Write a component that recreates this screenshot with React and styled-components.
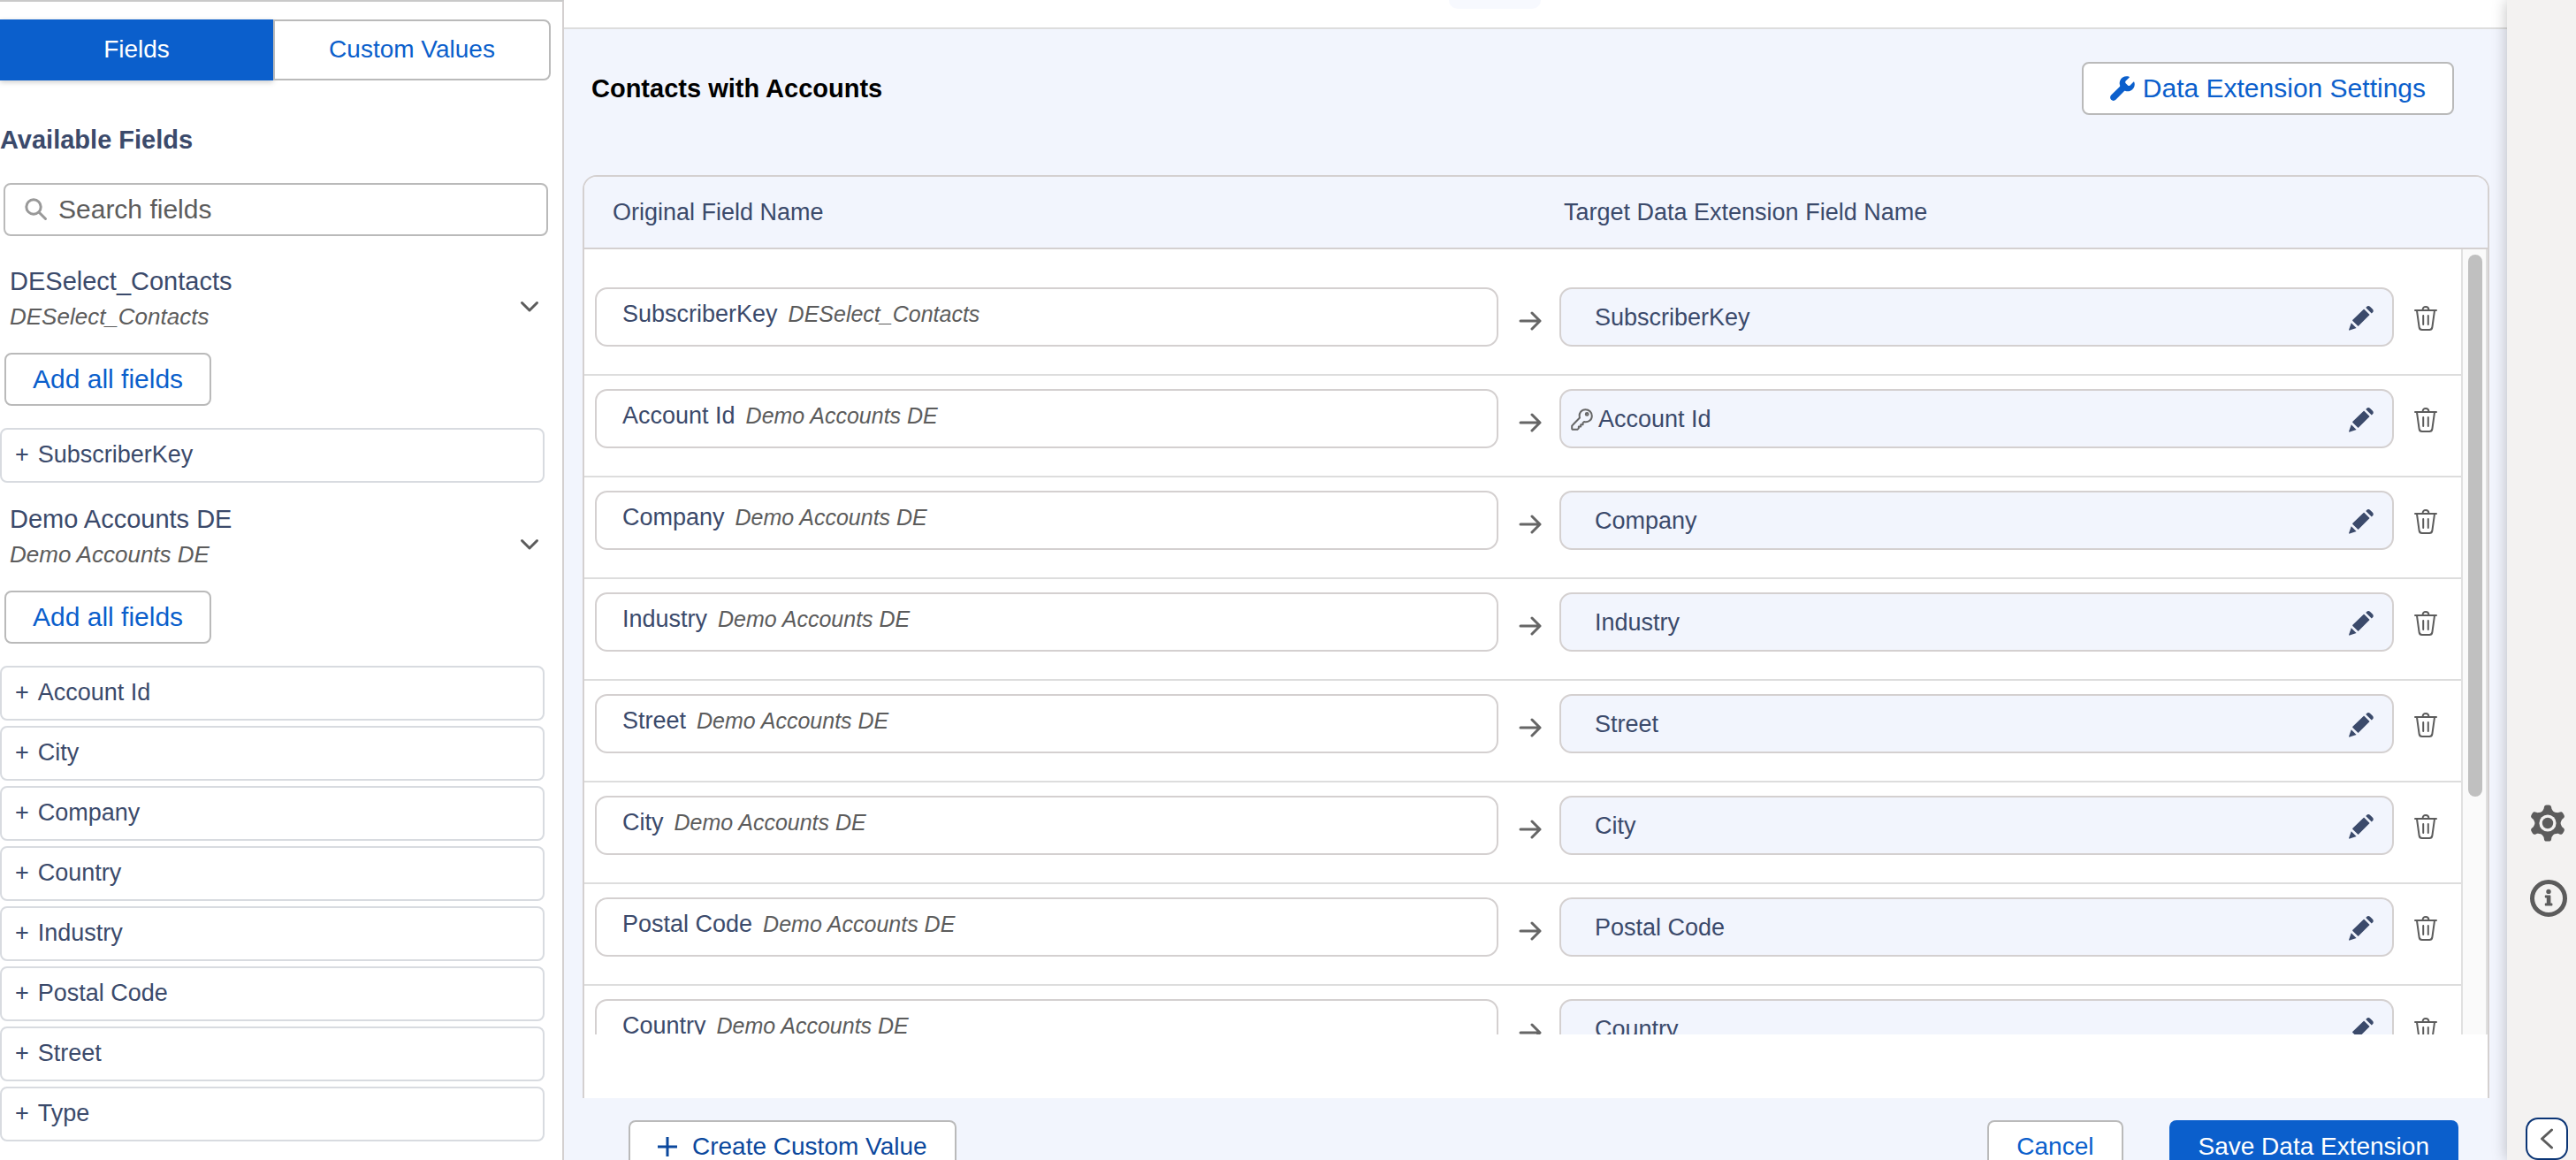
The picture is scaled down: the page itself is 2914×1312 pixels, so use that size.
import styled, { createGlobalStyle } from "styled-components";

const GlobalStyle = createGlobalStyle`
  * {
    box-sizing: border-box;
  }

  body {
    margin: 0;
    background: #ffffff;
    color: #3b4a6b;
    font-family: "Liberation Sans", Arial, sans-serif;
    font-size: 27px;
  }

  button,
  input {
    font-family: inherit;
  }

  svg {
    display: block;
    flex: none;
  }
`;

const fieldGroups = [
  {
    name: "DESelect_Contacts",
    source: "DESelect_Contacts",
    fields: ["SubscriberKey"],
  },
  {
    name: "Demo Accounts DE",
    source: "Demo Accounts DE",
    fields: [
      "Account Id",
      "City",
      "Company",
      "Country",
      "Industry",
      "Postal Code",
      "Street",
      "Type",
    ],
  },
];

const mappings = [
  { name: "SubscriberKey", source: "DESelect_Contacts" },
  { name: "Account Id", source: "Demo Accounts DE", isKey: true },
  { name: "Company", source: "Demo Accounts DE" },
  { name: "Industry", source: "Demo Accounts DE" },
  { name: "Street", source: "Demo Accounts DE" },
  { name: "City", source: "Demo Accounts DE" },
  { name: "Postal Code", source: "Demo Accounts DE" },
  { name: "Country", source: "Demo Accounts DE" },
];

// Icons
const SearchIcon = () => (
  <svg width="26" height="26" viewBox="0 0 26 26" fill="none" stroke="#999999" strokeWidth="3">
    <circle cx="10" cy="10" r="8.2" />
    <path d="M16 16L23.5 23.5" strokeLinecap="round" />
  </svg>
);

const ChevronIcon = () => (
  <svg width="22" height="14" viewBox="0 0 22 14" fill="none" stroke="#5c5c5c" strokeWidth="3">
    <path d="M2.5 2.5L11 11L19.5 2.5" strokeLinecap="round" strokeLinejoin="round" />
  </svg>
);

const WrenchIcon = () => (
  <svg width="28" height="28" viewBox="0 0 28 28" fill="#0b5fcc">
    <path d="M21.5 0.8C17.5 -0.6 12.8 1.2 11.2 5.2C10.5 7 10.5 8.9 11.1 10.6C11.3 11.1 11.2 11.5 10.9 11.9L1.2 21.6C-0.3 23.1 -0.3 25.3 1.1 26.8C2.6 28.3 4.9 28.3 6.4 26.8L16 17.1C16.4 16.8 16.9 16.7 17.4 16.9C19.1 17.5 21 17.5 22.8 16.8C26.8 15.2 28.7 11 27.3 6.9C27.1 6.5 26.6 6.4 26.3 6.7L22.6 10.5C21.9 11.2 20.7 11.2 20 10.5L17.7 8.2C17 7.5 17 6.3 17.7 5.6L21.6 1.8C22 1.5 21.9 1 21.5 0.8Z" />
  </svg>
);

const ArrowIcon = () => (
  <svg width="26" height="22" viewBox="0 0 26 22" fill="none" stroke="#666666" strokeWidth="3">
    <path d="M2 11H24M15 2L24 11L15 20" strokeLinecap="round" strokeLinejoin="round" />
  </svg>
);

const KeyIcon = () => (
  <svg width="25" height="25" viewBox="0 0 25 25" fill="none" stroke="#666666" strokeWidth="2">
    <path
      d="M10 10.5C8.6 5.4 12 1.2 16.5 1.2C20.6 1.2 23.8 4.4 23.8 8.4C23.8 12.8 19.8 16 15 15L13.6 16.2V18.2H11.2V20.4H8.8V22.4L7.4 23.8H2.4C1.6 23.8 1.2 23.4 1.2 22.6V19.6Z"
      strokeLinejoin="round"
    />
    <circle cx="18.2" cy="6.4" r="1.4" />
  </svg>
);

const PencilIcon = () => (
  <svg width="28" height="28" viewBox="0 0 28 28" fill="#3b4a6b">
    <path d="M20 1.2C21.2 -0.2 22.8 -0.2 24.2 1L26.8 3.6C28.1 5 28.1 6.4 26.8 7.6L25.8 8.6L19.2 2Z" />
    <path d="M17.6 4L23.6 10L10.6 23L4.4 17C4 16.6 4 16.2 4.4 15.8L16.6 4C17 3.6 17.3 3.7 17.6 4Z" />
    <path d="M2.8 19.2L8.6 25L1 27.6C0.4 27.8 -0.1 27.4 0.1 26.8Z" />
  </svg>
);

const TrashIcon = () => (
  <svg width="26" height="28" viewBox="0 0 26 28" fill="none" stroke="#5c5c5c" strokeWidth="2">
    <path d="M1 5H25" strokeLinecap="round" />
    <path d="M9.6 4.6C9.6 2.2 10.8 1 13 1C15.2 1 16.4 2.2 16.4 4.6" />
    <path d="M3 5.4L5.6 24C5.9 26 7 27 8.8 27H17.2C19 27 20.1 26 20.4 24L23 5.4" />
    <path d="M10.2 11V21M15.8 11V21" strokeLinecap="round" />
  </svg>
);

const GearIcon = () => (
  <svg width="40" height="42" viewBox="0 0 40 42" fill="#5c5c5c">
    {[0, 60, 120, 180, 240, 300].map((angle) => (
      <path
        key={angle}
        d="M10.5 12L14.6 6.4C15.4 5.4 15.7 4.8 15.8 3.6C16 1.4 17 0.4 18.8 0.4H21.2C23 0.4 24 1.4 24.2 3.6C24.3 4.8 24.6 5.4 25.4 6.4L29.5 12Z"
        transform={`rotate(${angle} 20 21)`}
      />
    ))}
    <circle cx="20" cy="21" r="14.4" />
    <circle cx="20" cy="21" r="9.6" fill="#f3f2f1" />
    <circle cx="20" cy="21" r="6.2" />
  </svg>
);

const InfoIcon = () => (
  <svg width="42" height="42" viewBox="0 0 42 42" fill="#5c5c5c">
    <circle cx="21" cy="21" r="18.5" fill="none" stroke="#5c5c5c" strokeWidth="5" />
    <circle cx="21" cy="13.4" r="2.7" />
    <path d="M17.8 17.6H22.4C23 17.6 23.4 18 23.4 18.6V26.6H24.4C25 26.6 25.4 27 25.4 27.6V28.6C25.4 29.2 25 29.6 24.4 29.6H17.8C17.2 29.6 16.8 29.2 16.8 28.6V27.6C16.8 27 17.2 26.6 17.8 26.6H18.8V20.6H17.8C17.2 20.6 16.8 20.2 16.8 19.6V18.6C16.8 18 17.2 17.6 17.8 17.6Z" />
  </svg>
);

const CollapseIcon = () => (
  <svg width="16" height="24" viewBox="0 0 16 24" fill="none" stroke="#5c5c5c" strokeWidth="3">
    <path d="M13.5 2L2.5 12L13.5 22" strokeLinecap="round" strokeLinejoin="round" />
  </svg>
);

const PlusIcon = () => (
  <svg width="22" height="22" viewBox="0 0 22 22" fill="none" stroke="#0b489d" strokeWidth="3">
    <path d="M11 0V22M0 11H22" />
  </svg>
);

const App = () => {
  return (
    <Page>
      <GlobalStyle />

      <Sidebar>
        <Tabs>
          <Tab type="button" $active>
            Fields
          </Tab>
          <Tab type="button">Custom Values</Tab>
        </Tabs>

        <SidebarTitle>Available Fields</SidebarTitle>

        <SearchBox>
          <SearchIcon />
          <input type="text" placeholder="Search fields" aria-label="Search fields" />
        </SearchBox>

        {fieldGroups.map((group) => (
          <FieldGroup key={group.name}>
            <GroupHeader type="button">
              <div>
                <GroupName>{group.name}</GroupName>
                <GroupSource>{group.source}</GroupSource>
              </div>
              <ChevronIcon />
            </GroupHeader>
            <AddAllButton type="button">Add all fields</AddAllButton>
            <FieldList>
              {group.fields.map((field) => (
                <li key={field}>
                  <FieldItem type="button">
                    <span>+</span>
                    {field}
                  </FieldItem>
                </li>
              ))}
            </FieldList>
          </FieldGroup>
        ))}
      </Sidebar>

      <Main>
        <TopBar>
          <TopPill />
        </TopBar>

        <Header>
          <h1>Contacts with Accounts</h1>
          <SettingsButton type="button">
            <WrenchIcon />
            Data Extension Settings
          </SettingsButton>
        </Header>

        <Panel>
          <MappingTable>
            <thead>
              <HeadRow>
                <th>Original Field Name</th>
                <th>Target Data Extension Field Name</th>
              </HeadRow>
            </thead>
            <tbody>
              {mappings.map((mapping) => (
                <MappingRow key={mapping.name}>
                  <td>
                    <OriginalField>
                      {mapping.name}
                      <em>{mapping.source}</em>
                    </OriginalField>
                  </td>
                  <ArrowCell>
                    <ArrowIcon />
                  </ArrowCell>
                  <td>
                    <TargetField $isKey={mapping.isKey}>
                      {mapping.isKey && <KeyIcon />}
                      <span>{mapping.name}</span>
                      <IconButton type="button" aria-label={`Edit ${mapping.name}`}>
                        <PencilIcon />
                      </IconButton>
                    </TargetField>
                  </td>
                  <DeleteCell>
                    <IconButton type="button" aria-label={`Delete ${mapping.name}`}>
                      <TrashIcon />
                    </IconButton>
                  </DeleteCell>
                </MappingRow>
              ))}
            </tbody>
          </MappingTable>
          <ScrollTrack>
            <ScrollThumb />
          </ScrollTrack>
        </Panel>

        <Footer>
          <CreateButton type="button">
            <PlusIcon />
            Create Custom Value
          </CreateButton>
          <FooterActions>
            <CancelButton type="button">Cancel</CancelButton>
            <SaveButton type="button">Save Data Extension</SaveButton>
          </FooterActions>
        </Footer>
      </Main>

      <Rail>
        <RailTools>
          <IconButton type="button" aria-label="Settings">
            <GearIcon />
          </IconButton>
          <IconButton type="button" aria-label="Information">
            <InfoIcon />
          </IconButton>
        </RailTools>
        <CollapseButton type="button" aria-label="Expand panel">
          <CollapseIcon />
        </CollapseButton>
      </Rail>
    </Page>
  );
};

const Page = styled.div`
  display: flex;
  height: 100vh;
  overflow: hidden;
`;

// Sidebar
const Sidebar = styled.aside`
  flex: 0 0 638px;
  overflow: hidden;
  padding-top: 20px;
  border-top: 2px solid #c9c9c9;
  border-right: 2px solid #d4d0d0;
  background: #ffffff;
`;

const Tabs = styled.div`
  display: grid;
  grid-template-columns: 309fr 314fr;
  height: 69px;
  margin-right: 13px;
`;

const Tab = styled.button`
  padding: 0 0 2px;
  border: 2px solid ${(props) => (props.$active ? "#0b5fcc" : "#bababa")};
  border-radius: ${(props) => (props.$active ? "0" : "0 8px 8px 0")};
  background: ${(props) => (props.$active ? "#0b5fcc" : "#ffffff")};
  color: ${(props) => (props.$active ? "#ffffff" : "#0b5fcc")};
  font-size: 28px;
  box-shadow: ${(props) => (props.$active ? "0 2px 6px rgba(0, 0, 0, 0.2)" : "none")};
  cursor: pointer;
`;

const SidebarTitle = styled.h2`
  margin: 50px 0 31px;
  font-size: 29px;
  line-height: 35px;
`;

const SearchBox = styled.label`
  display: flex;
  align-items: center;
  gap: 12px;
  height: 60px;
  margin: 0 16px 31px 4px;
  padding: 0 22px;
  border: 2px solid #bababa;
  border-radius: 8px;

  input {
    flex: 1;
    padding: 0;
    border: none;
    outline: none;
    background: transparent;
    font-size: 30px;
  }

  input::placeholder {
    color: #5c5c5c;
  }
`;

const FieldGroup = styled.section`
  margin-bottom: 21px;
`;

const GroupHeader = styled.button`
  display: flex;
  align-items: flex-end;
  justify-content: space-between;
  width: 100%;
  padding: 0 26px 0 11px;
  border: none;
  background: none;
  color: inherit;
  text-align: left;
  cursor: pointer;

  svg {
    margin-bottom: 24px;
  }
`;

const GroupName = styled.div`
  font-size: 29px;
  line-height: 40px;
`;

const GroupSource = styled.div`
  color: #5c5c5c;
  font-size: 26px;
  font-style: italic;
  line-height: 40px;
`;

const AddAllButton = styled.button`
  height: 60px;
  margin: 21px 0 25px 5px;
  padding: 0 30px;
  border: 2px solid #bababa;
  border-radius: 8px;
  background: #ffffff;
  color: #0b5fcc;
  font-size: 30px;
  cursor: pointer;
`;

const FieldList = styled.ul`
  display: flex;
  flex-direction: column;
  gap: 6px;
  margin: 0 20px 0 0;
  padding: 0;
  list-style: none;
`;

const FieldItem = styled.button`
  display: flex;
  align-items: center;
  gap: 10px;
  width: 100%;
  height: 62px;
  padding: 0 15px 2px;
  border: 2px solid #d8dbe0;
  border-radius: 8px;
  background: #ffffff;
  color: #3b4a6b;
  font-size: 27px;
  cursor: pointer;
`;

// Main
const Main = styled.main`
  display: flex;
  flex: 1;
  flex-direction: column;
  min-width: 0;
  background: #f2f5fd;
`;

const TopBar = styled.div`
  display: flex;
  flex: none;
  justify-content: center;
  height: 33px;
  padding-right: 92px;
  border-bottom: 2px solid #dddddd;
  background: #ffffff;
`;

const TopPill = styled.div`
  width: 104px;
  height: 10px;
  border-radius: 0 0 16px 16px;
  background: #f7f9fe;
`;

const Header = styled.header`
  display: flex;
  flex: none;
  align-items: flex-start;
  justify-content: space-between;
  height: 165px;
  padding: 37px 60px 0 31px;

  h1 {
    margin: 0;
    color: #000000;
    font-size: 29px;
    line-height: 60px;
  }
`;

const SettingsButton = styled.button`
  display: flex;
  align-items: center;
  gap: 9px;
  height: 60px;
  padding: 0 30px;
  border: 2px solid #bababa;
  border-radius: 8px;
  background: #ffffff;
  color: #0b5fcc;
  font-size: 30px;
  cursor: pointer;
`;

const Panel = styled.section`
  position: relative;
  display: flex;
  flex: 1;
  flex-direction: column;
  min-height: 0;
  margin: 0 20px 0 21px;
  padding-bottom: 72px;
  border: 2px solid #d4d0d0;
  border-bottom: none;
  border-radius: 16px 16px 0 0;
  background: #ffffff;
`;

const MappingTable = styled.table`
  display: flex;
  flex: 1;
  flex-direction: column;
  min-height: 0;

  thead {
    display: block;
    border-bottom: 2px solid #d4d0d0;
    border-radius: 14px 14px 0 0;
    background: #f2f5fd;
  }

  tbody {
    display: block;
    flex: 1;
    min-height: 0;
    margin-right: 30px;
    padding-top: 28px;
    overflow: hidden;
  }

  th,
  td {
    display: block;
    padding: 0;
  }
`;

const HeadRow = styled.tr`
  display: grid;
  grid-template-columns: 1077fr 1046fr;
  padding: 0 0 0 32px;

  th {
    font-size: 27px;
    font-weight: 400;
    line-height: 80px;
    text-align: left;
  }
`;

const MappingRow = styled.tr`
  display: grid;
  grid-template-columns: 1022fr 69px 944fr 76px;
  height: 115px;
  padding: 15px 0 31px 12px;
  border-bottom: 2px solid #dddddd;
`;

const OriginalField = styled.div`
  display: flex;
  align-items: baseline;
  gap: 12px;
  height: 67px;
  padding: 13px 29px;
  border: 2px solid #d4d0d0;
  border-radius: 14px;
  line-height: 31px;

  em {
    color: #5c5c5c;
    font-size: 25px;
  }
`;

const ArrowCell = styled.td`
  && {
    display: flex;
    align-items: center;
    justify-content: center;
    padding: 8px 0 0 3px;
  }
`;

const TargetField = styled.div`
  display: flex;
  align-items: center;
  gap: 6px;
  height: 67px;
  padding: 2px 21px 0 ${(props) => (props.$isKey ? "11px" : "38px")};
  border: 2px solid #d4d0d0;
  border-radius: 14px;
  background: #f2f5fd;

  span {
    flex: 1;
  }
`;

const DeleteCell = styled.td`
  && {
    display: flex;
    align-items: center;
    padding: 2px 0 0 23px;
  }
`;

const IconButton = styled.button`
  padding: 0;
  border: none;
  background: none;
  cursor: pointer;
`;

const ScrollTrack = styled.div`
  position: absolute;
  top: 82px;
  right: 0;
  bottom: 72px;
  width: 30px;
  padding: 6px;
  border: solid #e0e0e0;
  border-width: 0 2px;
  background: #fafafa;
`;

const ScrollThumb = styled.div`
  width: 16px;
  height: 70%;
  border-radius: 8px;
  background: #c0c0c0;
`;

// Footer
const Footer = styled.footer`
  display: flex;
  flex: none;
  align-items: flex-start;
  justify-content: space-between;
  height: 70px;
  padding: 25px 55px 0 73px;
`;

const FooterActions = styled.div`
  display: flex;
  gap: 52px;
`;

const CreateButton = styled.button`
  display: flex;
  align-items: center;
  gap: 17px;
  height: 60px;
  padding: 0 31px;
  border: 2px solid #bababa;
  border-radius: 8px;
  background: #ffffff;
  color: #0b489d;
  font-size: 28px;
  cursor: pointer;
`;

const CancelButton = styled.button`
  height: 60px;
  padding: 0 31px;
  border: 2px solid #bababa;
  border-radius: 8px;
  background: #ffffff;
  color: #0b5fcc;
  font-size: 28px;
  cursor: pointer;
`;

const SaveButton = styled(CancelButton)`
  border-color: #0b5fcc;
  background: #0b5fcc;
  color: #ffffff;
`;

// Right rail
const Rail = styled.aside`
  z-index: 1;
  display: flex;
  flex: 0 0 78px;
  flex-direction: column;
  justify-content: flex-end;
  gap: 227px;
  padding-left: 21px;
  background: #f3f2f1;
  box-shadow: 0 0 16px rgba(0, 0, 0, 0.25);
`;

const RailTools = styled.div`
  display: flex;
  flex-direction: column;
  align-items: flex-start;
  gap: 43px;
  padding-left: 5px;
`;

const CollapseButton = styled.button`
  display: flex;
  align-items: center;
  justify-content: center;
  width: 48px;
  height: 48px;
  padding: 0;
  border: 2px solid #0b3575;
  border-radius: 14px;
  background: #ffffff;
  cursor: pointer;
`;

export default App;
